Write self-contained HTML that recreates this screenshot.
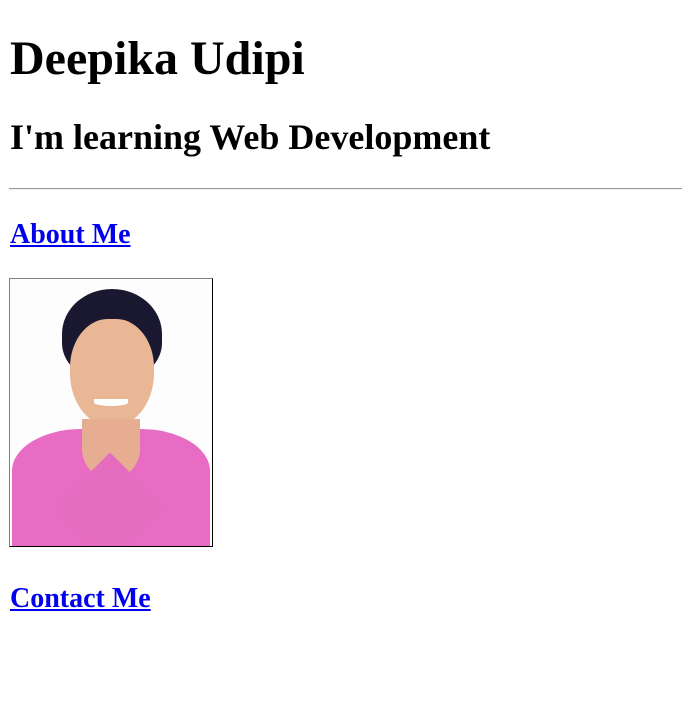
<!DOCTYPE html>
<html><head><meta charset="utf-8"><style>
html,body{margin:0;padding:0;background:#fff;width:691px;height:703px;overflow:hidden;position:relative;font-family:"Liberation Serif",serif;font-weight:bold;}
.t{position:absolute;left:10px;line-height:1;white-space:nowrap;margin:0;}
a{color:#0000ee;text-decoration:underline;}
hr{position:absolute;left:9px;top:188px;width:673px;margin:0;border:0;border-top:1px solid #9a9a9a;border-bottom:1px solid #eee;height:0;}
.img{position:absolute;left:9px;top:278px;width:202px;height:267px;border:1px solid;border-color:#808080 #000 #000 #808080;background:#fdfdfd;overflow:hidden;}
.img div{position:absolute;}
</style></head><body>
<div class="t" style="top:35px;font-size:48px;">Deepika Udipi</div>
<div class="t" style="top:119px;font-size:36px;">I'm learning Web Development</div>
<hr>
<div class="t" style="top:221px;font-size:28px;"><a>About Me</a></div>
<div class="img">
  <div style="left:52px;top:10px;width:100px;height:90px;border-radius:50% 50% 40% 40%;background:#1a1830;"></div>
  <div style="left:60px;top:40px;width:84px;height:108px;border-radius:45% 45% 50% 50%;background:#e9b796;"></div>
  <div style="left:84px;top:120px;width:34px;height:7px;border-radius:0 0 50% 50%;background:#fff;"></div>
  <div style="left:2px;top:150px;width:198px;height:120px;border-radius:35% 35% 0 0;background:#e86cc4;"></div>
  <div style="left:72px;top:140px;width:58px;height:60px;border-radius:0 0 50% 50%;background:#e6ad92;"></div>
  <div style="left:60px;top:190px;width:80px;height:80px;background:#e46dc0;transform:rotate(45deg);"></div>
</div>
<div class="t" style="top:585px;font-size:28px;"><a>Contact Me</a></div>
</body></html>
